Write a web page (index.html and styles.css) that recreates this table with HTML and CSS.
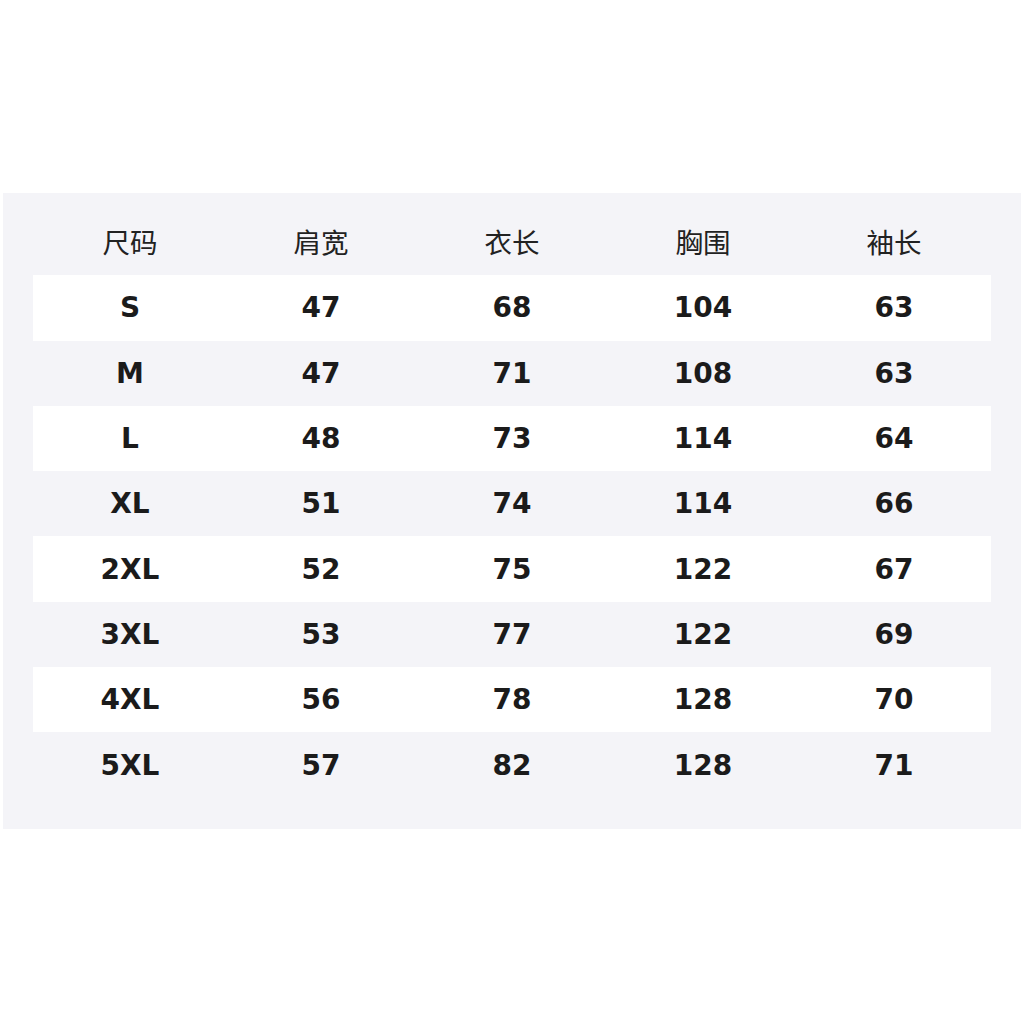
FILE: index.html
```html
<!DOCTYPE html>
<html lang="zh">
<head>
<meta charset="utf-8">
<link rel="stylesheet" href="styles.css">
</head>
<body>
<div class="panel">
  <div class="row head"><span>尺码</span><span>肩宽</span><span>衣长</span><span>胸围</span><span>袖长</span></div>
  <div class="row alt"><span>S</span><span>47</span><span>68</span><span>104</span><span>63</span></div>
  <div class="row"><span>M</span><span>47</span><span>71</span><span>108</span><span>63</span></div>
  <div class="row alt"><span>L</span><span>48</span><span>73</span><span>114</span><span>64</span></div>
  <div class="row"><span>XL</span><span>51</span><span>74</span><span>114</span><span>66</span></div>
  <div class="row alt"><span>2XL</span><span>52</span><span>75</span><span>122</span><span>67</span></div>
  <div class="row"><span>3XL</span><span>53</span><span>77</span><span>122</span><span>69</span></div>
  <div class="row alt"><span>4XL</span><span>56</span><span>78</span><span>128</span><span>70</span></div>
  <div class="row"><span>5XL</span><span>57</span><span>82</span><span>128</span><span>71</span></div>
</div>
</body>
</html>
```
FILE: styles.css
```css
html, body {
  margin: 0;
  padding: 0;
  background: #ffffff;
}
.panel {
  margin: 193px 0 0 3px;
  width: 1018px;
  height: 636px;
  box-sizing: border-box;
  padding: 17px 30px 32px 30px;
  background: #f4f4f8;
}
.row {
  display: grid;
  grid-template-columns: repeat(5, 1fr);
  height: 65.3px;
  box-sizing: border-box;
  padding: 0 1.5px;
  align-items: center;
  font-family: "DejaVu Sans", "Noto Sans CJK SC", sans-serif;
  font-weight: bold;
  font-size: 28px;
  color: #1b1b1b;
}
.row span {
  text-align: center;
}
.row.alt {
  background: #ffffff;
}
.row.head {
  padding-bottom: 4px;
  font-family: "Noto Sans CJK SC", sans-serif;
  font-weight: normal;
  font-size: 27.5px;
  color: #222222;
}
```
